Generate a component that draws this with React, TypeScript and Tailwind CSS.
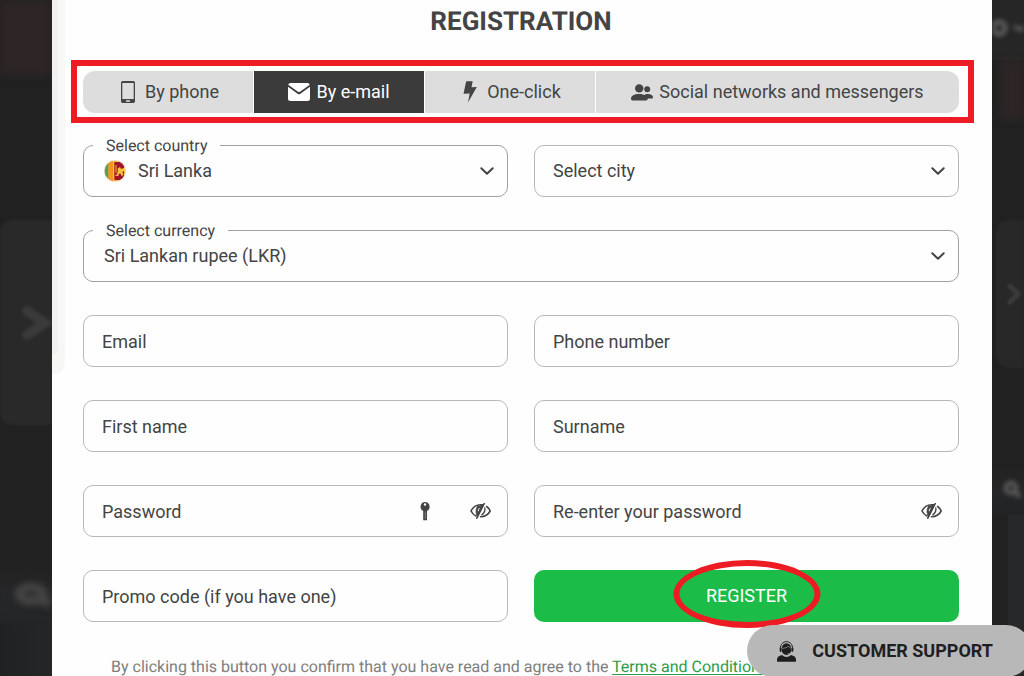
import type { ReactNode } from 'react';

type IconProps = { className?: string };

function PhoneIcon({ className = '' }: IconProps) {
  return (
    <svg viewBox="0 0 14 22" fill="currentColor" className={className} aria-hidden>
      <path
        fillRule="evenodd"
        d="M1.8 0h10.4C13.2 0 14 .8 14 1.8v18.4c0 1-.8 1.8-1.8 1.8H1.8C.8 22 0 21.2 0 20.2V1.8C0 .8.8 0 1.8 0ZM1.3 2v16h11.4V2H1.3Zm3.7 17.3v1.4h4v-1.4H5Z"
      />
    </svg>
  );
}

function MailIcon({ className = '' }: IconProps) {
  return (
    <svg viewBox="0 0 22 18" fill="currentColor" className={className} aria-hidden>
      <path d="M2.5 0h17A2.5 2.5 0 0 1 21.8 1.700L12 8.700q-1 .7-2 0L.2 1.700A2.500 2.500 0 0 1 2.500 0Z" />
      <path d="M0 3.800 10 11q1 .7 2 0L22 3.800v11.700a2.500 2.500 0 0 1-2.500 2.500h-17A2.500 2.500 0 0 1 0 15.500Z" />
    </svg>
  );
}

function BoltIcon({ className = '' }: IconProps) {
  return (
    <svg viewBox="0 0 14 22" fill="currentColor" className={className} aria-hidden>
      <path d="M3.200.3h6.500L8.500 6.200 13.800 6 5 21.600l1.700-9.200L.5 12.800Z" />
    </svg>
  );
}

function PeopleIcon({ className = '' }: IconProps) {
  return (
    <svg viewBox="0 0 22 17" fill="currentColor" className={className} aria-hidden>
      <circle cx="8.200" cy="4.400" r="4.200" />
      <circle cx="16.200" cy="5.200" r="3" />
      <path d="M0 14.800C0 12 3 10 8.200 10c2.300 0 4 .4 5.200 1.100.9-.8 2-1.100 3.400-1.100 3.200 0 5.200 1.500 5.200 3.300 0 .8-.5 1.200-1.300 1.200h-3.900c-.2 1.300-.8 2-1.800 2H1.700C.6 16.500 0 15.900 0 14.800Z" />
    </svg>
  );
}

function ChevronIcon({ className = '' }: IconProps) {
  return (
    <svg viewBox="0 0 14 8" fill="none" stroke="currentColor" strokeWidth="2" strokeLinecap="round" strokeLinejoin="round" className={className} aria-hidden>
      <path d="m1.300 1.300 5.700 5.500 5.700-5.500" />
    </svg>
  );
}

function KeyIcon({ className = '' }: IconProps) {
  return (
    <svg viewBox="0 0 10 19" fill="currentColor" className={className} aria-hidden>
      <path fillRule="evenodd" d="M5 0a4.700 4.700 0 0 1 2 8.900v9.300H3.200V8.900A4.700 4.700 0 0 1 5 0Zm0 1.300a1.200 1.200 0 1 0 0 2.400 1.200 1.200 0 0 0 0-2.400Z" />
      <path d="M5.300 9.500v7.500" stroke="#999" strokeWidth=".7" />
    </svg>
  );
}

function HiddenEyeIcon({ className = '' }: IconProps) {
  return (
    <svg viewBox="0 0 21 16" fill="none" stroke="currentColor" strokeWidth="1.600" strokeLinecap="round" className={className} aria-hidden>
      <path d="M12.800 1.900C7 1 3 4 1 8c1.200 2.300 2.900 4 5 5" />
      <path d="M14.300.5 6.800 15.200" />
      <path d="M7.600 3.300 13 2.200 7.300 13.300C5.600 9.800 5.600 6 7.600 3.300Z" fill="currentColor" strokeWidth=".8" />
      <path d="M9.300 5.200q-1.200 1-1.100 2.600" stroke="#fff" strokeWidth="1" />
      <path d="M16.600 3.500C18.300 4.600 19.400 6.200 20.200 8c-2 3.700-5.300 5.700-9.700 5.800" />
      <path d="M14.800 5c.5 3-.7 5.300-3 6.700" strokeWidth="1.300" />
    </svg>
  );
}

function OperatorIcon({ className = '' }: IconProps) {
  return (
    <svg viewBox="0 0 19 21" fill="currentColor" className={className} aria-hidden>
      <path d="M3.300 8C3.300-1.800 15.700-1.800 15.700 8" fill="none" stroke="currentColor" strokeWidth="1" />
      <path d="M4.700 7.500a4.800 5.300 0 0 1 9.600 0v1.500a4.800 5 0 0 1-9.600 0Z" />
      <rect x="2.700" y="6.500" width="1.800" height="4.500" rx=".9" />
      <rect x="14.500" y="6.500" width="1.800" height="4.500" rx=".9" />
      <path d="M15.200 10.500c-.5 1.600-2 2.200-4.500 2.200" fill="none" stroke="#b8b8b8" strokeWidth=".6" />
      <path d="M5 7.300c3.300 0 5.500-.8 6.500-2.300.6 1.200 1.300 1.900 2.500 2.200" fill="none" stroke="#b8b8b8" strokeWidth=".6" />
      <path d="M0 20.800v-2.300c0-2.400 2-3.800 5-4.500 2.500 2.500 6.500 2.500 9 0 3 .7 5 2.100 5 4.500v2.300Z" />
    </svg>
  );
}

function SriLankaFlag({ className = '' }: IconProps) {
  return (
    <svg viewBox="0 0 22 22" className={className} aria-hidden>
      <clipPath id="flag-circle">
        <circle cx="11" cy="11" r="10.300" />
      </clipPath>
      <circle cx="11" cy="11" r="11" fill="#e4e0dc" />
      <g clipPath="url(#flag-circle)">
        <path fill="#f5c33b" d="M0 0h22v22H0z" />
        <path fill="#58a04b" d="M0 0h4.500v22H0z" />
        <path fill="#f7941d" d="M4.500 0H9v22H4.500z" />
        <path fill="#a5122a" d="M10.300 2H20v18h-9.700z" />
        <path fill="#f5c33b" d="M11.500 5h1v8h1.200V8.500L16 7l1 2 3-1v3l-1.500 1 1 3-2 1-1-2.500-2 .5v2h-3v-1.200h1.500v-2H11.500Z" />
      </g>
    </svg>
  );
}

const tabs = [
  { label: 'By phone', Icon: PhoneIcon, size: 'h-[22px] w-3.5', shape: 'rounded-l-xl bg-[#ddd]' },
  { label: 'By e-mail', Icon: MailIcon, size: 'h-[18px] w-[22px]', shape: 'bg-[#3b3b3b] text-white', active: true },
  { label: 'One-click', Icon: BoltIcon, size: 'h-[22px] w-3.5', shape: 'bg-[#ddd]' },
  { label: 'Social networks and messengers', Icon: PeopleIcon, size: 'h-[17px] w-[22px]', shape: 'rounded-r-xl bg-[#ddd]' },
];

const box = 'flex h-[52px] min-w-0 items-center rounded-[10px] border border-[#b8b8b8]';

function SelectField({ id, label, value, icon, className = '' }: { id: string; label: string; value: string; icon?: ReactNode; className?: string }) {
  return (
    <fieldset className={`h-[52px] min-w-0 rounded-[10px] border border-[#a0a0a0] ${className}`}>
      <legend className="ml-[9px] h-px px-[13px] text-base leading-[1px] whitespace-nowrap">
        <label htmlFor={id}>{label}</label>
      </legend>
      <div className="flex h-[50px] items-center gap-3 pr-[13px] pl-5">
        {icon}
        <select id={id} className="h-full min-w-0 flex-1 appearance-none bg-transparent outline-none">
          <option>{value}</option>
        </select>
        <ChevronIcon className="h-2 w-3.5 shrink-0" />
      </div>
    </fieldset>
  );
}

function TextField({ label, type = 'text', children }: { label: string; type?: string; children?: ReactNode }) {
  return (
    <div className={`${box} pr-4 pl-[18px]`}>
      <input type={type} aria-label={label} placeholder={label} className="h-full min-w-0 flex-1 bg-transparent outline-none placeholder:text-[#444]" />
      {children}
    </div>
  );
}

function ShowPassword() {
  return (
    <button type="button" aria-label="Show password" className="shrink-0">
      <HiddenEyeIcon className="h-4 w-[21px]" />
    </button>
  );
}

function LeftBackdrop() {
  return (
    <div className="flex w-[52px] shrink-0 flex-col overflow-hidden" aria-hidden>
      <div className="h-[75px] bg-[#2e2626] blur-[4px]" />
      <div className="h-[145px]" />
      <div className="flex h-[205px] items-center justify-end rounded-l-xl bg-[#292929] blur-[1px]">
        <svg viewBox="0 0 30 34" className="h-[34px] w-[30px] blur-[1px]" fill="none" stroke="#3a3a3a" strokeWidth="10" strokeLinecap="round">
          <path d="m5 5 18 12L5 29" />
        </svg>
      </div>
      <div className="h-[140px]" />
      <div className="flex h-[60px] items-center justify-end bg-linear-to-b from-[#212121] via-[#262728] to-[#232425]">
        <svg viewBox="0 0 40 28" className="h-7 w-10 blur-[3px]" fill="none" stroke="#444" strokeWidth="9">
          <ellipse cx="19" cy="13" rx="12" ry="7" />
          <path d="m26 17 12 6" />
        </svg>
      </div>
      <div className="flex-1 bg-linear-to-r from-[#202122] to-[#242628]" />
    </div>
  );
}

function RightBackdrop() {
  return (
    <div className="flex w-8 shrink-0 flex-col overflow-hidden" aria-hidden>
      <div className="flex h-[60px] items-center bg-[#262626]">
        <svg viewBox="0 0 32 24" className="h-6 w-8 blur-[2px]" fill="none" stroke="#555" strokeWidth="6">
          <circle cx="7" cy="10" r="6" />
          <path d="m22 8 6 4 6-4" strokeWidth="4" />
        </svg>
      </div>
      <div className="ml-2 h-[58px] bg-[#2e2626] blur-[4px]" />
      <div className="h-[102px]" />
      <div className="ml-1 flex h-[148px] items-center justify-center rounded-l-xl bg-[#282828] blur-[1px]">
        <svg viewBox="0 0 16 24" className="ml-2 h-6 w-4" fill="none" stroke="#3b3b3b" strokeWidth="5" strokeLinecap="round" strokeLinejoin="round">
          <path d="m4 4 8 8-8 8" />
        </svg>
      </div>
      <div className="h-[97px]" />
      <div className="flex h-[50px] items-center justify-center bg-linear-to-b from-[#212121] via-[#252627] to-[#222324]">
        <svg viewBox="0 0 20 20" className="ml-2 h-5 w-5 blur-[2px]" fill="none" stroke="#555" strokeWidth="5">
          <circle cx="9" cy="8" r="5" />
          <path d="m13 12 5 5" />
        </svg>
      </div>
      <div className="ml-4 flex-1 bg-[#26282a]" />
    </div>
  );
}

export default function App() {
  return (
    <div className="flex h-screen overflow-hidden bg-[#212121] font-[Roboto,sans-serif] text-lg text-[#444] [text-rendering:geometricPrecision]">
      <LeftBackdrop />

      <main className="relative min-w-0 flex-1 bg-[#fefefe] pr-[33px] pl-[31px]">
        <div className="absolute top-0 left-0 h-[375px] w-[13px] rounded-br-[13px] bg-[#f7f7f6]" aria-hidden>
          <div className="h-[355px] w-1.5 rounded-br-md bg-[#f1f1f1]" />
        </div>

        <h1 className="pt-1.5 text-center text-[26px] leading-8 font-bold">REGISTRATION</h1>

        <div className="mt-[22px] -mr-[15px] -ml-3 border-6 border-[#ed1c24] pt-[5px] pr-[9px] pb-1 pl-1.5">
          <div role="tablist" className="grid grid-cols-[170fr_170fr_170fr_363fr] gap-px">
            {tabs.map(({ label, Icon, size, shape, active }) => (
              <button key={label} type="button" role="tab" aria-selected={!!active} className={`flex h-[42px] min-w-0 items-center justify-center gap-1.5 whitespace-nowrap ${shape}`}>
                <span className="flex w-[22px] justify-center">
                  <Icon className={size} />
                </span>
                {label}
              </button>
            ))}
          </div>
        </div>

        <form className="mt-[22px] grid grid-cols-2 gap-x-[26px] gap-y-[33px]">
          <SelectField id="country" label="Select country" value="Sri Lanka" icon={<SriLankaFlag className="h-[22px] w-[22px] shrink-0" />} />
          <div className={`${box} pr-[13px] pl-[18px]`}>
            <select aria-label="Select city" className="h-full min-w-0 flex-1 appearance-none bg-transparent outline-none">
              <option>Select city</option>
            </select>
            <ChevronIcon className="h-2 w-3.5 shrink-0" />
          </div>
          <SelectField id="currency" label="Select currency" value="Sri Lankan rupee (LKR)" className="col-span-2" />
          <TextField label="Email" type="email" />
          <TextField label="Phone number" type="tel" />
          <TextField label="First name" />
          <TextField label="Surname" />
          <TextField label="Password" type="password">
            <button type="button" aria-label="Generate password" className="mr-10 shrink-0">
              <KeyIcon className="h-[19px] w-2.5" />
            </button>
            <ShowPassword />
          </TextField>
          <TextField label="Re-enter your password" type="password">
            <ShowPassword />
          </TextField>
          <TextField label="Promo code (if you have one)" />
          <button type="submit" className="relative h-[52px] rounded-[10px] bg-[#1bbd48] text-white">
            REGISTER
            <span className="pointer-events-none absolute -top-2.5 -bottom-1.5 left-1/2 w-[147px] -translate-x-1/2 rounded-[50%] border-6 border-[#ed1c24]" />
          </button>
        </form>

        <p className="mt-[33px] pl-7 text-base leading-6 whitespace-nowrap text-[#7d7d7d]">
          By clicking this button you confirm that you have read and agree to the{' '}
          <a href="#terms" className="text-[#2a9c48] underline underline-offset-2">Terms and Conditions</a>
        </p>
      </main>

      <RightBackdrop />

      <button type="button" className="fixed -right-2 -bottom-px flex h-[52px] items-center gap-4 rounded-full bg-[#b8b8b8] pr-[39px] pl-[30px] font-bold text-[#1f1f1f]">
        <OperatorIcon className="h-[21px] w-[19px]" />
        CUSTOMER SUPPORT
      </button>
    </div>
  );
}
